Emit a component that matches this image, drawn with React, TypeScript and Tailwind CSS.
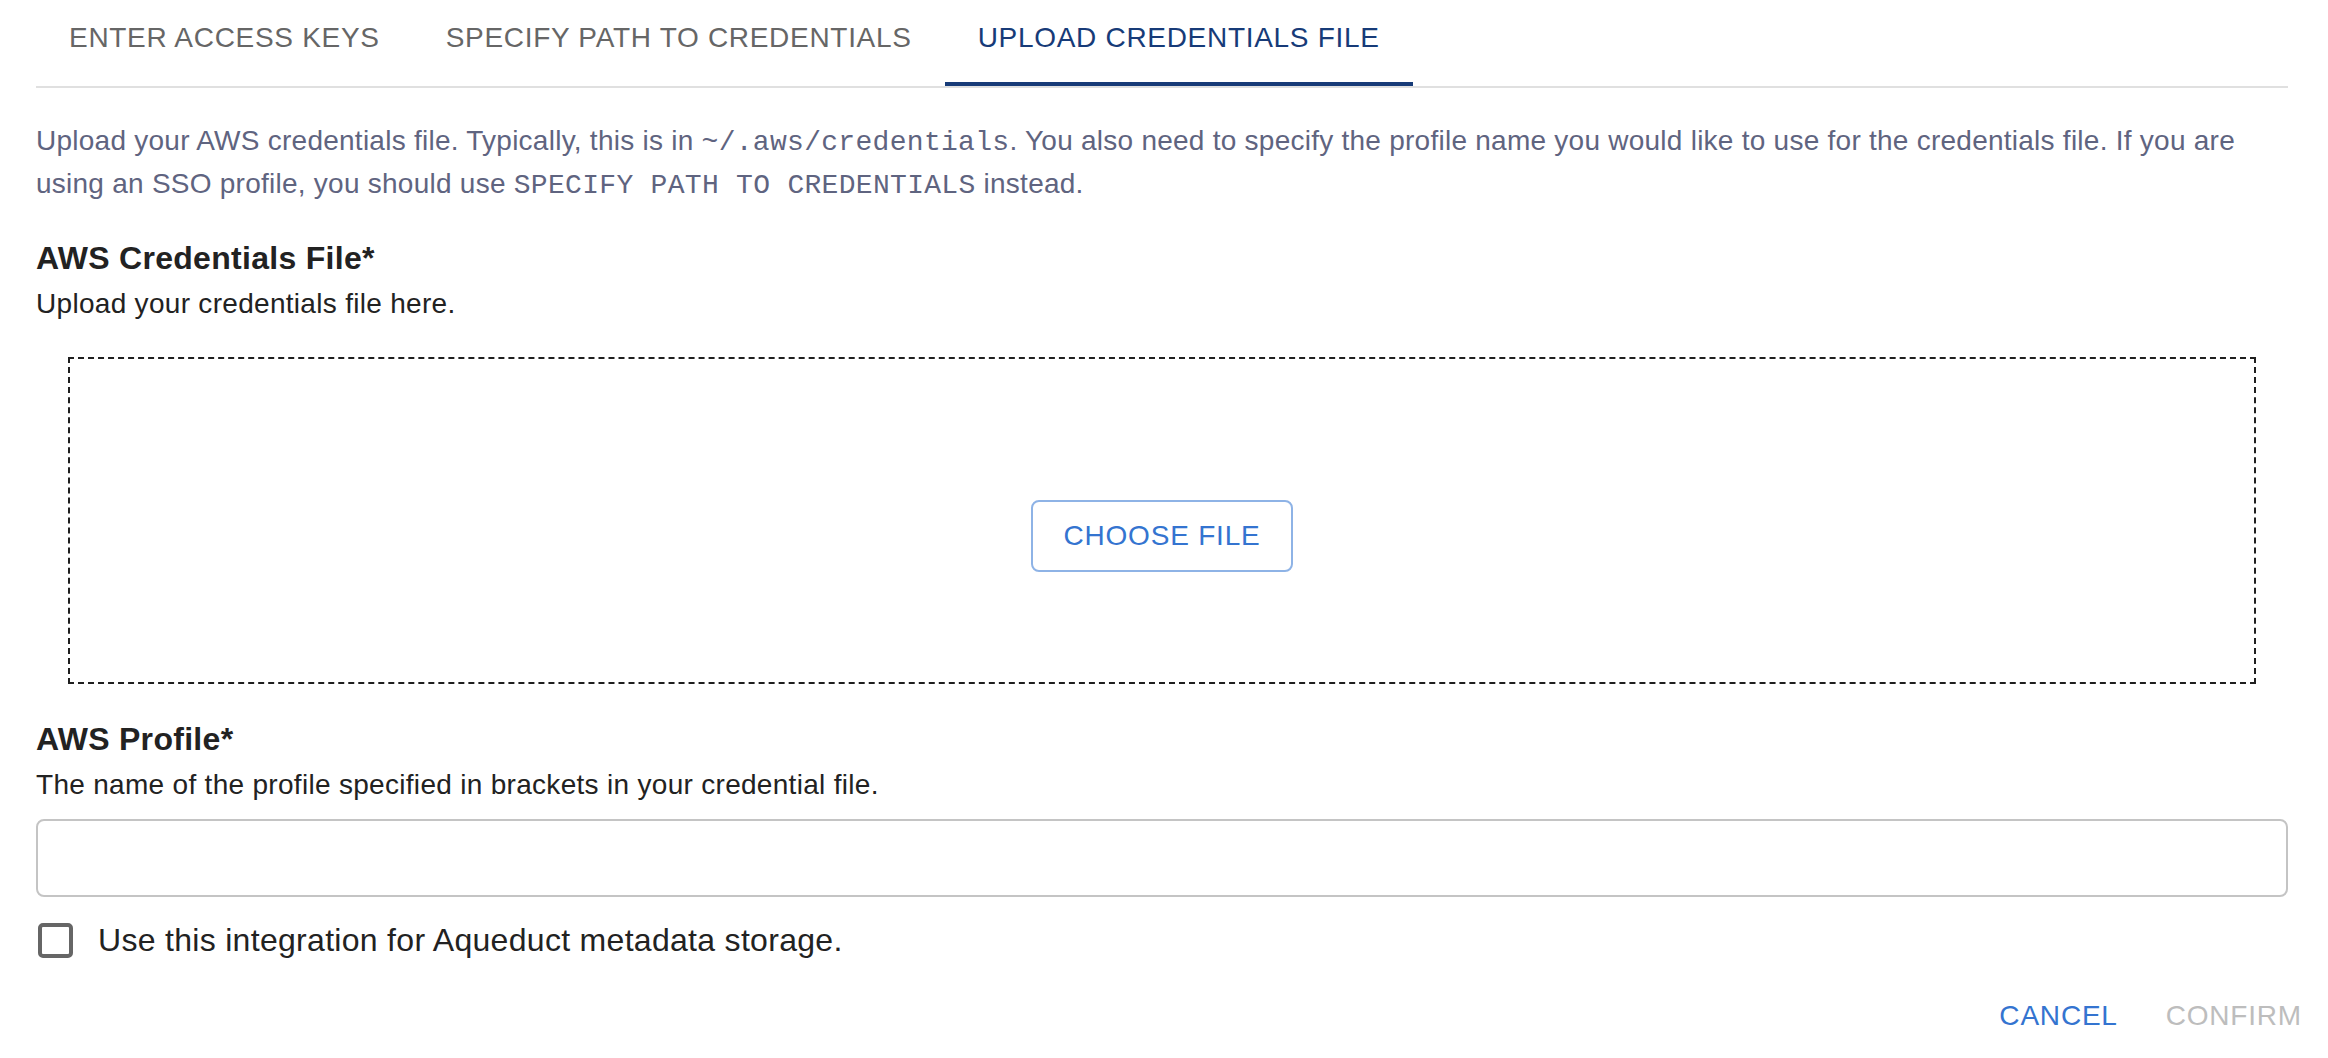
import { useState } from "react";

const tabs = ["ENTER ACCESS KEYS", "SPECIFY PATH TO CREDENTIALS", "UPLOAD CREDENTIALS FILE"];

export default function App() {
  const [active, setActive] = useState(2);
  const [profile, setProfile] = useState("");
  const [useMeta, setUseMeta] = useState(false);

  return (
    <div className="w-[2328px] h-[1058px] bg-white font-['Liberation_Sans',Arial,sans-serif] text-[#222]">
      {/* tabs */}
      <div className="ml-[36px] mr-[40px] flex border-b-2 border-[#e0e0e0]">
        {tabs.map((t, i) => (
          <button
            key={t}
            onClick={() => setActive(i)}
            className={
              "relative h-[86px] px-[33px] pb-[10px] flex items-center text-[28px] tracking-[0.7px] leading-none " +
              (i === active ? "text-[#173b78]" : "text-[#666666]")
            }
          >
            {t}
            {i === active && <span className="absolute left-0 right-0 bottom-0 h-[4px] bg-[#173b78]" />}
          </button>
        ))}
      </div>

      <div className="pl-[36px] pr-[40px] flex flex-col">
        <p className="mt-[32px] text-[28px] leading-[41px] tracking-[0.25px] text-[#5f6480]">
          Upload your AWS credentials file. Typically, this is in{" "}
          <code className="font-['Liberation_Mono','Courier_New',monospace] tracking-[0.3px]">~/.aws/credentials</code>. You also need to
          specify the profile name you would like to use for the credentials file. If you are
          <br />
          using an SSO profile, you should use{" "}
          <code className="font-['Liberation_Mono','Courier_New',monospace] tracking-[0.3px]">SPECIFY PATH TO CREDENTIALS</code> instead.
        </p>

        <h3 className="mt-[32px] text-[32px] leading-[40px] tracking-[0.3px] font-bold">AWS Credentials File*</h3>
        <p className="mt-[6px] text-[28px] leading-[40px] tracking-[0.3px]">Upload your credentials file here.</p>

        <div className="mt-[33px] mx-[32px] h-[327px] pt-[30px] border-2 border-dashed border-[#1f1f1f] flex items-center justify-center">
          <button className="h-[72px] px-[30px] border-2 border-[#8eb3e6] rounded-[8px] text-[28px] tracking-[0.8px] text-[#3474d0]">
            CHOOSE FILE
          </button>
        </div>

        <h3 className="mt-[35px] text-[32px] leading-[40px] tracking-[0.3px] font-bold">AWS Profile*</h3>
        <p className="mt-[6px] text-[28px] leading-[40px] tracking-[0.3px]">
          The name of the profile specified in brackets in your credential file.
        </p>

        <input
          value={profile}
          onChange={(e) => setProfile(e.target.value)}
          className="mt-[14px] h-[78px] w-full border-2 border-[#c4c4c4] rounded-[8px] px-[28px] text-[32px] outline-none"
        />

        <label className="mt-[8px] h-[70px] flex items-center gap-[25px] cursor-pointer">
          <span
            onClick={() => setUseMeta(!useMeta)}
            className={
              "ml-[2px] w-[35px] h-[35px] rounded-[5px] border-[4px] " +
              (useMeta ? "border-[#3474d0] bg-[#3474d0]" : "border-[#666666]")
            }
          />
          <span className="text-[32px] leading-[40px] tracking-[0.3px]">Use this integration for Aqueduct metadata storage.</span>
        </label>
      </div>

      <div className="mt-[18px] h-[46px] pr-[10px] flex items-center justify-end gap-[16px] text-[28px] tracking-[0.8px]">
        <button className="px-[16px] text-[#3474d0]">CANCEL</button>
        <button className="px-[16px] text-[#bdbdbd]" disabled>
          CONFIRM
        </button>
      </div>
    </div>
  );
}
